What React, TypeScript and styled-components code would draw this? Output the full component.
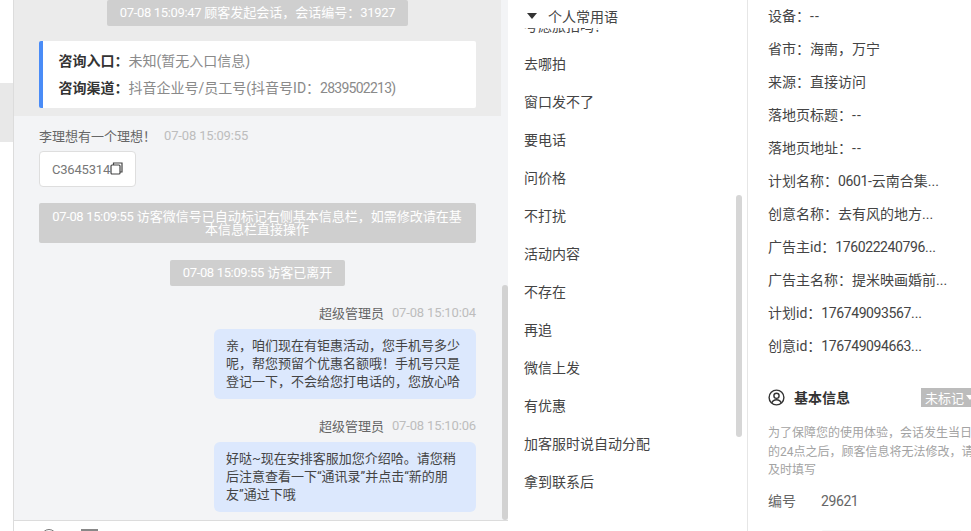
import React from 'react';
import styled, { createGlobalStyle } from 'styled-components';

const Global = createGlobalStyle`
  html, body {
    margin: 0;
    padding: 0;
    background: #fff;
    overflow: hidden;
  }
  * {
    box-sizing: border-box;
  }
`;

const Page = styled.div`
  display: flex;
  width: 971px;
  height: 531px;
  overflow: hidden;
  font-family: Roboto, "Noto Sans CJK SC", sans-serif;
  font-size: 13px;
  font-variant-ligatures: none;
  color: #333;
`;

const Rail = styled.div`
  flex: 0 0 14px;
  display: flex;
  flex-direction: column;
  padding-top: 83px;
  border-right: 1px solid #dcdcdc;
`;

const RailItem = styled.div`
  height: 59px;
  background: #e8e8e8;
`;

const ChatColumn = styled.div`
  position: relative;
  flex: 0 0 494px;
  display: flex;
  flex-direction: column;
  background: #f3f4f6;
`;

const Messages = styled.div`
  flex: 0 0 520px;
  display: flex;
  flex-direction: column;
  overflow: hidden;
`;

const ChatBar = styled.div`
  position: absolute;
  right: 0;
  top: 285px;
  width: 6px;
  height: 235px;
  border-radius: 3px;
  background: #d2d2d2;
`;

const TopBlock = styled.div`
  flex: 0 0 116px;
  width: 487px;
  display: flex;
  flex-direction: column;
  align-items: center;
  background: #ebebeb;
`;

const SystemNote = styled.div<{ $wide?: boolean }>`
  width: ${p => (p.$wide ? '437px' : 'auto')};
  padding: ${p => (p.$wide ? '7px 12px' : '0 12.5px')};
  border-radius: 2px;
  background: #cfcfcf;
  color: #fff;
  line-height: ${p => (p.$wide ? '13px' : '26px')};
  text-align: center;
`;

const NoteRow = styled.div<{ $top: number; $shift: number }>`
  display: flex;
  justify-content: center;
  margin-top: ${p => p.$top}px;
  padding-right: ${p => p.$shift}px;
`;

const Stamp = styled.span`
  letter-spacing: -0.35px;
`;

const EntryCard = styled.div`
  width: 437px;
  height: 67px;
  margin: 15px 0 0 -1px;
  padding: 7px 0 0 16px;
  border-left: 4px solid #4a8cf7;
  border-radius: 2px;
  background: #fff;
  font-size: 14px;
  line-height: 27px;
`;

const EntryRow = styled.div`
  display: flex;
  color: #8a8a8a;
`;

const EntryLabel = styled.span`
  font-weight: 700;
  color: #333;
`;

const Num = styled.span`
  letter-spacing: -0.4px;
`;

const Dash = styled.span`
  letter-spacing: 1.2px;
`;

const EntryNum = styled.span`
  letter-spacing: -0.75px;
`;

const Visitor = styled.div`
  display: flex;
  flex-direction: column;
  align-items: flex-start;
  padding: 10px 0 0 25px;
`;

const MetaRow = styled.div`
  display: flex;
  gap: 8px;
  height: 18px;
  align-items: center;
  color: #666;
`;

const MetaTime = styled.span`
  letter-spacing: -0.15px;
  color: #bdbdbd;
`;

const CodeCard = styled.div`
  display: flex;
  align-items: center;
  width: 97px;
  height: 36px;
  margin-top: 7px;
  padding-left: 12px;
  border: 1px solid #dedede;
  border-radius: 4px;
  background: #fff;
  color: #777;
  letter-spacing: -0.2px;
`;

const CopyIcon = styled.svg`
  flex: none;
  width: 13px;
  height: 13px;
  margin-top: -1px;
`;

const AgentBlock = styled.div`
  display: flex;
  flex-direction: column;
  align-items: flex-end;
  padding-right: 32px;
  margin-top: 17px;
`;

const Bubble = styled.div`
  width: 262px;
  height: 70px;
  margin-top: 8px;
  padding: 8px 12px;
  border-radius: 6px;
  background: #dce8fd;
  color: #444;
  line-height: 18px;
`;

const Composer = styled.div`
  display: flex;
  flex: 1;
  gap: 24px;
  padding: 8px 0 0 27px;
  border-top: 1px solid #dcdcdc;
  background: #fff;
`;

const ComposerRound = styled.div`
  width: 16px;
  height: 16px;
  border: 1.5px solid #777;
  border-radius: 50%;
`;

const ComposerSquare = styled.div`
  width: 17px;
  height: 14px;
  border-top: 2px solid #888;
`;

const PhrasePanel = styled.div`
  position: relative;
  flex: 0 0 240px;
  display: flex;
  flex-direction: column;
  border-right: 1px solid #e6e6e6;
  background: #fff;
  font-size: 14px;
`;

const PhraseHeader = styled.div`
  flex: 0 0 28px;
  display: flex;
  align-items: center;
  gap: 11px;
  padding: 4px 0 0 19px;
  color: #444;
`;

const Caret = styled.span`
  width: 0;
  height: 0;
  border-left: 5px solid transparent;
  border-right: 5px solid transparent;
  border-top: 6px solid #333;
`;

const PhraseClip = styled.div`
  flex: 1;
  overflow: hidden;
`;

const PhraseList = styled.div`
  display: flex;
  flex-direction: column;
  margin-top: -21px;
  padding-left: 16px;
`;

const PhraseItem = styled.div`
  height: 38px;
  line-height: 38px;
  color: #444;
`;

const PhraseBar = styled.div`
  position: absolute;
  top: 195px;
  right: 5px;
  width: 6px;
  height: 242px;
  border-radius: 3px;
  background: #d6d6d6;
`;

const InfoPanel = styled.div`
  flex: 1;
  min-width: 0;
  display: flex;
  flex-direction: column;
  padding: 0 0 0 20px;
  overflow: hidden;
  background: #fff;
  font-size: 14px;
`;

const InfoRow = styled.div`
  flex: none;
  height: 33px;
  line-height: 33px;
  white-space: nowrap;
  color: #444;
`;

const InfoList = styled.div`
  display: flex;
  flex-direction: column;
`;

const SectionHead = styled.div`
  display: flex;
  align-items: center;
  height: 20px;
  margin-top: 24px;
`;

const UserIcon = styled.svg`
  flex: none;
  width: 17px;
  height: 17px;
  margin-right: 9px;
`;

const SectionTitle = styled.span`
  width: 127px;
  flex: none;
  font-weight: 700;
  color: #333;
`;

const StatusTag = styled.div`
  flex: none;
  display: flex;
  align-items: center;
  gap: 2px;
  width: 60px;
  height: 19px;
  padding-left: 4px;
  background: #bcbcbc;
  color: #fff;
  font-size: 13px;
`;

const TagCaret = styled.span`
  border-left: 4px solid transparent;
  border-right: 4px solid transparent;
  border-top: 5px solid #fff;
`;

const Hint = styled.div`
  flex: none;
  margin-top: 17px;
  width: 240px;
  color: #a3a3a3;
  font-size: 12px;
  line-height: 18.5px;
  white-space: nowrap;
`;

const FieldRow = styled.div`
  flex: none;
  display: flex;
  gap: 25px;
  margin-top: 11px;
  line-height: 20px;
  color: #666;
`;

const FieldInput = styled.div`
  flex: none;
  width: 141px;
  height: 10px;
  margin: 19px 0 0 53px;
  border-radius: 3px 3px 0 0;
  background: #f7f7f7;
`;

const phrases = ['考虑旅拍吗？', '去哪拍', '窗口发不了', '要电话', '问价格', '不打扰', '活动内容', '不存在', '再追', '微信上发', '有优惠', '加客服时说自动分配', '拿到联系后'];

const infoRows = [
  '设备：--',
  '省市：海南，万宁',
  '来源：直接访问',
  '落地页标题：--',
  '落地页地址：--',
  '计划名称：0601-云南合集...',
  '创意名称：去有风的地方...',
  '广告主id：176022240796...',
  '广告主名称：提米映画婚前...',
  '计划id：176749093567...',
  '创意id：176749094663...',
];

const agentMessages = [
  { time: '07-08 15:10:04', lines: ['亲，咱们现在有钜惠活动，您手机号多少', '呢，帮您预留个优惠名额哦！手机号只是', '登记一下，不会给您打电话的，您放心哈'] },
  { time: '07-08 15:10:06', lines: ['好哒~现在安排客服加您介绍哈。请您稍', '后注意查看一下“通讯录”并点击“新的朋', '友”通过下哦'] },
];

// digits run a bit narrower than Roboto in the original font, dashes wider
const withNums = (text: string) =>
  text.split(/(\d+|--)/).map((part, i) => {
    if (i % 2 === 0) return part;
    return part === '--' ? <Dash key={i}>{part}</Dash> : <Num key={i}>{part}</Num>;
  });

const App: React.FC = () => (
  <Page>
    <Global />
    <Rail>
      <RailItem />
    </Rail>
    <ChatColumn>
      <Messages>
        <TopBlock>
          <SystemNote><Stamp>07-08 15:09:47</Stamp> 顾客发起会话，会话编号：<Stamp>31927</Stamp></SystemNote>
          <EntryCard>
            <EntryRow><EntryLabel>咨询入口：</EntryLabel>未知(暂无入口信息)</EntryRow>
            <EntryRow><EntryLabel>咨询渠道：</EntryLabel><span>抖音企业号/员工号(抖音号ID：<EntryNum>2839502213</EntryNum>)</span></EntryRow>
          </EntryCard>
        </TopBlock>
        <Visitor>
          <MetaRow>
            <span>李理想有一个理想！</span>
            <MetaTime>07-08 15:09:55</MetaTime>
          </MetaRow>
          <CodeCard>
            C3645314
            <CopyIcon viewBox="0 0 13 13" fill="none" stroke="#444" strokeWidth="1.2">
              <rect x="1" y="3" width="9" height="9" rx="1" />
              <path d="M3.5 3V1h8.5v9h-2" />
            </CopyIcon>
          </CodeCard>
        </Visitor>
        <NoteRow $top={16} $shift={8}>
          <SystemNote $wide><Stamp>07-08 15:09:55</Stamp> 访客微信号已自动标记右侧基本信息栏，如需修改请在基本信息栏直接操作</SystemNote>
        </NoteRow>
        <NoteRow $top={17} $shift={7}>
          <SystemNote><Stamp>07-08 15:09:55</Stamp> 访客已离开</SystemNote>
        </NoteRow>
        {agentMessages.map(message => (
          <AgentBlock key={message.time}>
            <MetaRow>
              <span>超级管理员</span>
              <MetaTime>{message.time}</MetaTime>
            </MetaRow>
            <Bubble>
              {message.lines.map(line => (
                <div key={line}>{line}</div>
              ))}
            </Bubble>
          </AgentBlock>
        ))}
      </Messages>
      <Composer>
        <ComposerRound />
        <ComposerSquare />
      </Composer>
      <ChatBar />
    </ChatColumn>
    <PhrasePanel>
      <PhraseHeader>
        <Caret />
        个人常用语
      </PhraseHeader>
      <PhraseClip>
        <PhraseList>
          {phrases.map(phrase => (
            <PhraseItem key={phrase}>{phrase}</PhraseItem>
          ))}
        </PhraseList>
      </PhraseClip>
      <PhraseBar />
    </PhrasePanel>
    <InfoPanel>
      <InfoList>
        {infoRows.map(row => (
          <InfoRow key={row}>{withNums(row)}</InfoRow>
        ))}
      </InfoList>
      <SectionHead>
        <UserIcon viewBox="0 0 17 17" fill="none" stroke="#333" strokeWidth="1.4">
          <circle cx="8.5" cy="8.5" r="7.4" />
          <circle cx="8.5" cy="6.8" r="2.6" />
          <path d="M3.8 14c.8-2.2 2.6-3.2 4.7-3.2s3.9 1 4.7 3.2" />
        </UserIcon>
        <SectionTitle>基本信息</SectionTitle>
        <StatusTag>未标记<TagCaret /></StatusTag>
      </SectionHead>
      <Hint>
        为了保障您的使用体验，会话发生当日次日<br />
        的24点之后，顾客信息将无法修改，请您<br />
        及时填写
      </Hint>
      <FieldRow>
        <span>编号</span>
        <Num>29621</Num>
      </FieldRow>
      <FieldInput />
    </InfoPanel>
  </Page>
);

export default App;
